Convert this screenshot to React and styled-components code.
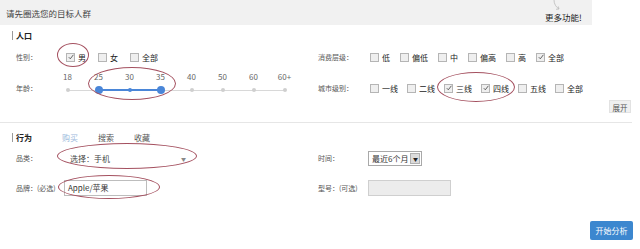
import React from "react";
import styled, { createGlobalStyle } from "styled-components";

const GlobalStyle = createGlobalStyle`
  body {
    margin: 0;
    background: #fff;
    font-family: "Noto Sans CJK SC", "Noto Sans", sans-serif;
    color: #333;
  }
`;

const Page = styled.div`
  position: relative;
  width: 640px;
  height: 249px;
  overflow: hidden;
  font-size: 8px;
`;

const Header = styled.div`
  width: 592px;
  height: 25px;
  background: #f1f1f1;
  display: flex;
  justify-content: space-between;
  align-items: stretch;
`;

const HeaderTitle = styled.div`
  align-self: center;
  padding-left: 6px;
  font-size: 8.5px;
  color: #444;
`;

const HeaderMore = styled.div`
  display: flex;
  flex-direction: column;
  align-items: flex-start;
  margin-right: 9px;
  width: 38px;
`;

const MoreText = styled.div`
  font-size: 8.5px;
  line-height: 12px;
  color: #222;
`;

const Section = styled.div`
  padding-left: 16px;
`;

const SectionHead = styled.div`
  display: flex;
  align-items: center;
  height: 20px;
  margin-left: -4px;
`;

const SectionTitle = styled.div`
  width: 50px;
  display: flex;
  align-items: center;
  gap: 3px;
  color: #222;
  font-weight: 700;
`;

const Bar = styled.span`
  width: 1px;
  height: 9px;
  background: #9a9a9a;
`;

const Tab = styled.div`
  margin-right: 20px;
  color: ${(p) => (p.$active ? "#9bb9dc" : "#555")};
`;

const Columns = styled.div`
  display: grid;
  grid-template-columns: 302px 1fr;
`;

const Column = styled.div`
  display: flex;
  flex-direction: column;
  gap: ${(p) => p.$gap || 0}px;
`;

const FieldRow = styled.div`
  display: flex;
  align-items: ${(p) => p.$align || "center"};
  height: ${(p) => p.$height}px;
`;

const Label = styled.div`
  width: ${(p) => p.$width || 48}px;
  flex-shrink: 0;
  color: #555;
  font-size: 7px;
  white-space: nowrap;
  line-height: 14px;
  padding-bottom: ${(p) => p.$pb || 0}px;
`;

const Options = styled.div`
  display: flex;
  align-items: center;
  gap: ${(p) => p.$gap}px;
  margin-left: 2px;
  height: 14px;
  padding-bottom: ${(p) => p.$pb || 0}px;
`;

const Option = styled.label`
  display: flex;
  align-items: center;
  gap: 3px;
  color: #222;
`;

const Box = styled.span`
  width: 7px;
  height: 7px;
  border: 1px solid #b5b5b5;
  background: #efefef;
  display: flex;
  align-items: center;
  justify-content: center;
`;

const Slider = styled.div`
  display: flex;
  margin-left: -12px;
  margin-top: 2px;
`;

const Stop = styled.div`
  width: 31px;
  display: flex;
  flex-direction: column;
  align-items: center;
`;

const StopLabel = styled.div`
  height: 12px;
  line-height: 12px;
  color: #666;
`;

const DotCell = styled.div`
  width: 100%;
  height: 14px;
  display: flex;
  align-items: center;
  justify-content: center;
  background:
    linear-gradient(${(p) => p.$left}, ${(p) => p.$left}) left center / 50% ${(p) => (p.$leftOn ? 2 : 1)}px no-repeat,
    linear-gradient(${(p) => p.$right}, ${(p) => p.$right}) right center / 50% ${(p) => (p.$rightOn ? 2 : 1)}px no-repeat;
`;

const Dot = styled.span`
  width: ${(p) => p.$size}px;
  height: ${(p) => p.$size}px;
  border-radius: 50%;
  background: ${(p) => p.$color};
`;

const ExpandRow = styled.div`
  display: flex;
  justify-content: flex-end;
  padding-right: 9px;
  margin-top: 3px;
`;

const SmallButton = styled.div`
  width: 22px;
  height: 13px;
  line-height: 13px;
  text-align: center;
  background: #f0f0f0;
  border: 1px solid #e2e2e2;
  box-sizing: border-box;
  color: #555;
  font-size: 7.5px;
`;

const Divider = styled.div`
  height: 1px;
  background: #e6e6e6;
  width: 632px;
  margin-top: 9px;
  margin-bottom: 4px;
`;

const Select = styled.div`
  display: flex;
  align-items: center;
  justify-content: space-between;
  width: 116px;
  height: 16px;
  padding: 0 6px 0 6px;
  color: #444;
`;

const Caret = styled.span`
  font-size: 5px;
  color: #888;
`;

const TimeSelect = styled.div`
  display: flex;
  align-items: center;
  height: 13px;
  border: 1px solid #a9a9a9;
  background: #fff;
  padding-left: 3px;
  color: #333;
  gap: 2px;
`;

const DropButton = styled.span`
  width: 10px;
  height: 11px;
  margin-right: 1px;
  background: #dcdcdc;
  border: 1px solid #b0b0b0;
  box-sizing: border-box;
  display: flex;
  align-items: center;
  justify-content: center;
  font-size: 5px;
  color: #222;
`;

const Input = styled.div`
  width: 83px;
  height: 16px;
  box-sizing: border-box;
  border: 1px solid ${(p) => (p.$disabled ? "#cfcfcf" : "#bdbdbd")};
  background: ${(p) => (p.$disabled ? "#ececec" : "#fff")};
  padding-left: 3px;
  line-height: 14px;
  color: #333;
`;

const Footer = styled.div`
  display: flex;
  justify-content: flex-end;
  padding-right: 7px;
  margin-top: 22px;
`;

const PrimaryButton = styled.div`
  width: 43px;
  height: 19px;
  line-height: 19px;
  text-align: center;
  background: #3c87cf;
  border-radius: 2px;
  color: #fff;
`;

const Circle = styled.span`
  position: absolute;
  left: ${(p) => p.$x}px;
  top: ${(p) => p.$y}px;
  width: ${(p) => p.$w}px;
  height: ${(p) => p.$h}px;
  border: 1px solid #a4505f;
  border-radius: 50%;
  box-sizing: border-box;
  pointer-events: none;
`;

const Check = () => (
  <svg width="6" height="6" viewBox="0 0 6 6">
    <path d="M0.8 3.2 L2.3 4.8 L5.4 0.8" fill="none" stroke="#555" strokeWidth="0.9" />
  </svg>
);

const CheckOption = ({ checked, children }) => (
  <Option>
    <Box>{checked && <Check />}</Box>
    {children}
  </Option>
);

const ages = ["18", "25", "30", "35", "40", "50", "60", "60+"];
const BLUE = "#4a86d8";
const GREY = "#d8d8d8";

const AgeSlider = () => (
  <Slider>
    {ages.map((a, i) => {
      const inRange = i >= 1 && i <= 3;
      const leftOn = i >= 2 && i <= 3;
      const rightOn = i >= 1 && i <= 2;
      return (
        <Stop key={a}>
          <StopLabel>{a}</StopLabel>
          <DotCell
            $left={i === 0 ? "transparent" : leftOn ? BLUE : GREY}
            $right={i === ages.length - 1 ? "transparent" : rightOn ? BLUE : GREY}
            $leftOn={leftOn}
            $rightOn={rightOn}
          >
            <Dot
              $size={i === 1 || i === 3 ? 8 : 4}
              $color={inRange ? BLUE : "#cfcfcf"}
            />
          </DotCell>
        </Stop>
      );
    })}
  </Slider>
);

const App = () => {
  return (
    <Page>
      <GlobalStyle />
      <Header>
        <HeaderTitle>请先圈选您的目标人群</HeaderTitle>
        <HeaderMore>
          <svg width="20" height="11" viewBox="0 0 20 11">
            <path d="M9 0 C9 4 11 7 14 9" fill="none" stroke="#bbb" strokeWidth="0.8" />
            <path d="M11 9.3 L14 9 L13.3 6.4" fill="none" stroke="#bbb" strokeWidth="0.8" />
          </svg>
          <MoreText>更多功能!</MoreText>
        </HeaderMore>
      </Header>

      <Section>
        <SectionHead>
          <SectionTitle><Bar />人口</SectionTitle>
        </SectionHead>
        <Columns>
          <Column>
            <FieldRow $height={24}>
              <Label>性别：</Label>
              <Options $gap={12}>
                <CheckOption checked>男</CheckOption>
                <CheckOption>女</CheckOption>
                <CheckOption>全部</CheckOption>
              </Options>
            </FieldRow>
            <FieldRow $height={28} $align="flex-end">
              <Label $pb={2}>年龄：</Label>
              <AgeSlider />
            </FieldRow>
          </Column>
          <Column>
            <FieldRow $height={24}>
              <Label $width={50}>消费层级：</Label>
              <Options $gap={10}>
                <CheckOption>低</CheckOption>
                <CheckOption>偏低</CheckOption>
                <CheckOption>中</CheckOption>
                <CheckOption>偏高</CheckOption>
                <CheckOption>高</CheckOption>
                <CheckOption checked>全部</CheckOption>
              </Options>
            </FieldRow>
            <FieldRow $height={28} $align="flex-end">
              <Label $width={50} $pb={2}>城市级别：</Label>
              <Options $gap={9} $pb={2}>
                <CheckOption>一线</CheckOption>
                <CheckOption>二线</CheckOption>
                <CheckOption checked>三线</CheckOption>
                <CheckOption checked>四线</CheckOption>
                <CheckOption>五线</CheckOption>
                <CheckOption>全部</CheckOption>
              </Options>
            </FieldRow>
          </Column>
        </Columns>
        <ExpandRow>
          <SmallButton>展开</SmallButton>
        </ExpandRow>
      </Section>

      <Divider />

      <Section>
        <SectionHead>
          <SectionTitle><Bar />行为</SectionTitle>
          <Tab $active>购买</Tab>
          <Tab>搜索</Tab>
          <Tab>收藏</Tab>
        </SectionHead>
        <Columns>
          <Column $gap={8}>
            <FieldRow $height={22}>
              <Label>品类：</Label>
              <Select>
                <span>选择：手机</span>
                <Caret>▼</Caret>
              </Select>
            </FieldRow>
            <FieldRow $height={22}>
              <Label>品牌：(必选)</Label>
              <Input>Apple/苹果</Input>
            </FieldRow>
          </Column>
          <Column $gap={8}>
            <FieldRow $height={22}>
              <Label $width={50}>时间：</Label>
              <TimeSelect>
                最近6个月
                <DropButton>▼</DropButton>
              </TimeSelect>
            </FieldRow>
            <FieldRow $height={22}>
              <Label $width={50}>型号：(可选)</Label>
              <Input $disabled />
            </FieldRow>
          </Column>
        </Columns>
        <Footer>
          <PrimaryButton>开始分析</PrimaryButton>
        </Footer>
      </Section>

      <Circle $x={57} $y={43} $w={32} $h={24} />
      <Circle $x={88} $y={67} $w={88} $h={33} />
      <Circle $x={437} $y={72} $w={78} $h={30} />
      <Circle $x={57} $y={143} $w={140} $h={26} />
      <Circle $x={58} $y={175} $w={102} $h={24} />
    </Page>
  );
};

export default App;
